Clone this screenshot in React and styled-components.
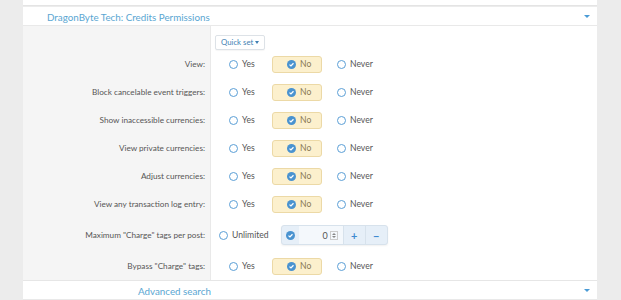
import React from "react";
import styled, { createGlobalStyle } from "styled-components";

const GlobalStyle = createGlobalStyle`
  html, body {
    margin: 0;
    padding: 0;
    background: #ececec;
    font-family: "Segoe UI", Lato, sans-serif;
    font-size: 8.2px;
    color: #555;
  }
`;

const Page = styled.div`
  width: 574px;
  margin-left: 23px;
  height: 300px;
  overflow: hidden;
`;

const PrevBlock = styled.div`
  height: 5px;
  background: #fff;
  border-bottom: 1px solid #e4e4e4;
  margin-bottom: 1px;
`;

const SectionHeader = styled.div`
  display: flex;
  align-items: center;
  justify-content: space-between;
  box-sizing: border-box;
  height: 19px;
  background: #fff;
  border-bottom: 1px solid #e9e9e9;
  padding: 1px 7px 0 ${({ $indent }) => $indent}px;
  color: #5aa6d2;
  font-size: 9.8px;
`;

const Arrow = styled.span`
  width: 0;
  height: 0;
  border-left: 3px solid transparent;
  border-right: 3px solid transparent;
  border-top: 3px solid #4a9bd6;
`;

const Body = styled.div`
  display: grid;
  grid-template-columns: 187px 1fr;
  background: linear-gradient(to right, #f5f5f5 187px, #e9e9e9 187px, #e9e9e9 188px, #fff 188px);
  border-bottom: 1px solid #e6e6e6;
`;

const Label = styled.div`
  display: flex;
  align-items: center;
  justify-content: flex-end;
  padding-right: 5px;
  height: ${({ $h }) => $h}px;
`;

const Control = styled.div`
  display: flex;
  align-items: center;
  height: ${({ $h }) => $h}px;
  padding-left: ${({ $pad }) => $pad ?? 4}px;
`;

const QuickSet = styled.button`
  display: inline-flex;
  align-items: center;
  gap: 2px;
  height: 15px;
  padding: 0 5px;
  margin-top: 8px;
  margin-left: 1px;
  border: 1px solid #dde2e7;
  border-radius: 2px;
  background: #fff;
  color: #3f7fb3;
  font-family: inherit;
  font-size: 7.8px;
  box-shadow: 0 1px 1px rgba(0, 0, 0, 0.04);
`;

const SmallArrow = styled.span`
  border-left: 2.5px solid transparent;
  border-right: 2.5px solid transparent;
  border-top: 3px solid #3f7fb3;
`;

const Option = styled.label`
  display: inline-flex;
  align-items: center;
  gap: 4px;
  box-sizing: border-box;
  height: 17px;
  width: ${({ $w }) => ($w ? `${$w}px` : "auto")};
  padding-left: ${({ $pl }) => $pl ?? 14}px;
  border-radius: 3px;
  border: 1px solid ${({ $on }) => ($on ? "#ecd9a6" : "transparent")};
  background: ${({ $on }) => ($on ? "#fcf0cd" : "transparent")};
  color: ${({ $on }) => ($on ? "#8a7a55" : "#555")};
  font-size: 8.6px;
`;

const Circle = styled.span`
  box-sizing: border-box;
  width: 9px;
  height: 9px;
  border-radius: 50%;
  border: 1.5px solid #5b9fd6;
  background: #fff;
`;

const Check = () => (
  <svg width="9" height="9" viewBox="0 0 10 10">
    <circle cx="5" cy="5" r="5" fill="#4a93d0" />
    <path d="M2.8 5.1 L4.4 6.6 L7.2 3.6" fill="none" stroke="#fff" strokeWidth="1.4" />
  </svg>
);

const Group = styled.div`
  display: flex;
  height: 18px;
  margin-left: 11px;
  border: 1px solid #d7e2ec;
  border-radius: 3px;
  background: #e6eff8;
  box-shadow: 0 1px 2px rgba(0, 0, 0, 0.06);
  overflow: hidden;
`;

const Cell = styled.div`
  display: flex;
  align-items: center;
  justify-content: ${({ $end }) => ($end ? "flex-end" : "center")};
  width: ${({ $w }) => $w}px;
  padding-right: ${({ $end }) => ($end ? 5 : 0)}px;
  box-sizing: border-box;
  gap: 2px;
  background: ${({ $light }) => ($light ? "#f4f8fc" : "transparent")};
  border-left: ${({ $sep }) => ($sep ? "1px solid #d7e2ec" : "none")};
  color: ${({ $btn }) => ($btn ? "#3f8ad0" : "#555")};
  font-weight: ${({ $btn }) => ($btn ? 700 : 400)};
  font-size: ${({ $btn }) => ($btn ? 11 : 9)}px;
`;

const Spinner = styled.span`
  display: inline-flex;
  flex-direction: column;
  gap: 1px;
  border: 1px solid #ccc;
  padding: 1px;
  & > i {
    border-left: 2px solid transparent;
    border-right: 2px solid transparent;
  }
  & > i:first-child {
    border-bottom: 2px solid #888;
  }
  & > i:last-child {
    border-top: 2px solid #888;
  }
`;

const Choices = ({ value = "No" }) => (
  <>
    <Option $w={58} $on={value === "Yes"}>
      {value === "Yes" ? <Check /> : <Circle />}Yes
    </Option>
    <Option $w={50} $on={value === "No"}>
      {value === "No" ? <Check /> : <Circle />}No
    </Option>
    <Option $on={value === "Never"}>
      {value === "Never" ? <Check /> : <Circle />}Never
    </Option>
  </>
);

const rows = [
  "View:",
  "Block cancelable event triggers:",
  "Show inaccessible currencies:",
  "View private currencies:",
  "Adjust currencies:",
  "View any transaction log entry:",
];

export default function App() {
  return (
    <Page>
      <GlobalStyle />
      <PrevBlock />
      <SectionHeader $indent={24}>
        DragonByte Tech: Credits Permissions
        <Arrow />
      </SectionHeader>
      <Body>
        <Label $h={24} />
        <Control $h={24} $pad={4}>
          <QuickSet>
            Quick set <SmallArrow />
          </QuickSet>
        </Control>
        {rows.map((r) => (
          <React.Fragment key={r}>
            <Label $h={28}>{r}</Label>
            <Control $h={28}>
              <Choices />
            </Control>
          </React.Fragment>
        ))}
        <Label $h={34}>Maximum "Charge" tags per post:</Label>
        <Control $h={34} $pad={8}>
          <Option $pl={0}>
            <Circle />
            Unlimited
          </Option>
          <Group>
            <Cell $w={17}>
              <Check />
            </Cell>
            <Cell $w={44} $light $end>
              0
              <Spinner>
                <i />
                <i />
              </Spinner>
            </Cell>
            <Cell $w={22} $sep $btn>
              +
            </Cell>
            <Cell $w={22} $sep $btn>
              −
            </Cell>
          </Group>
        </Control>
        <Label $h={28}>Bypass "Charge" tags:</Label>
        <Control $h={28}>
          <Choices />
        </Control>
      </Body>
      <SectionHeader $indent={115}>
        Advanced search
        <Arrow />
      </SectionHeader>
    </Page>
  );
}
